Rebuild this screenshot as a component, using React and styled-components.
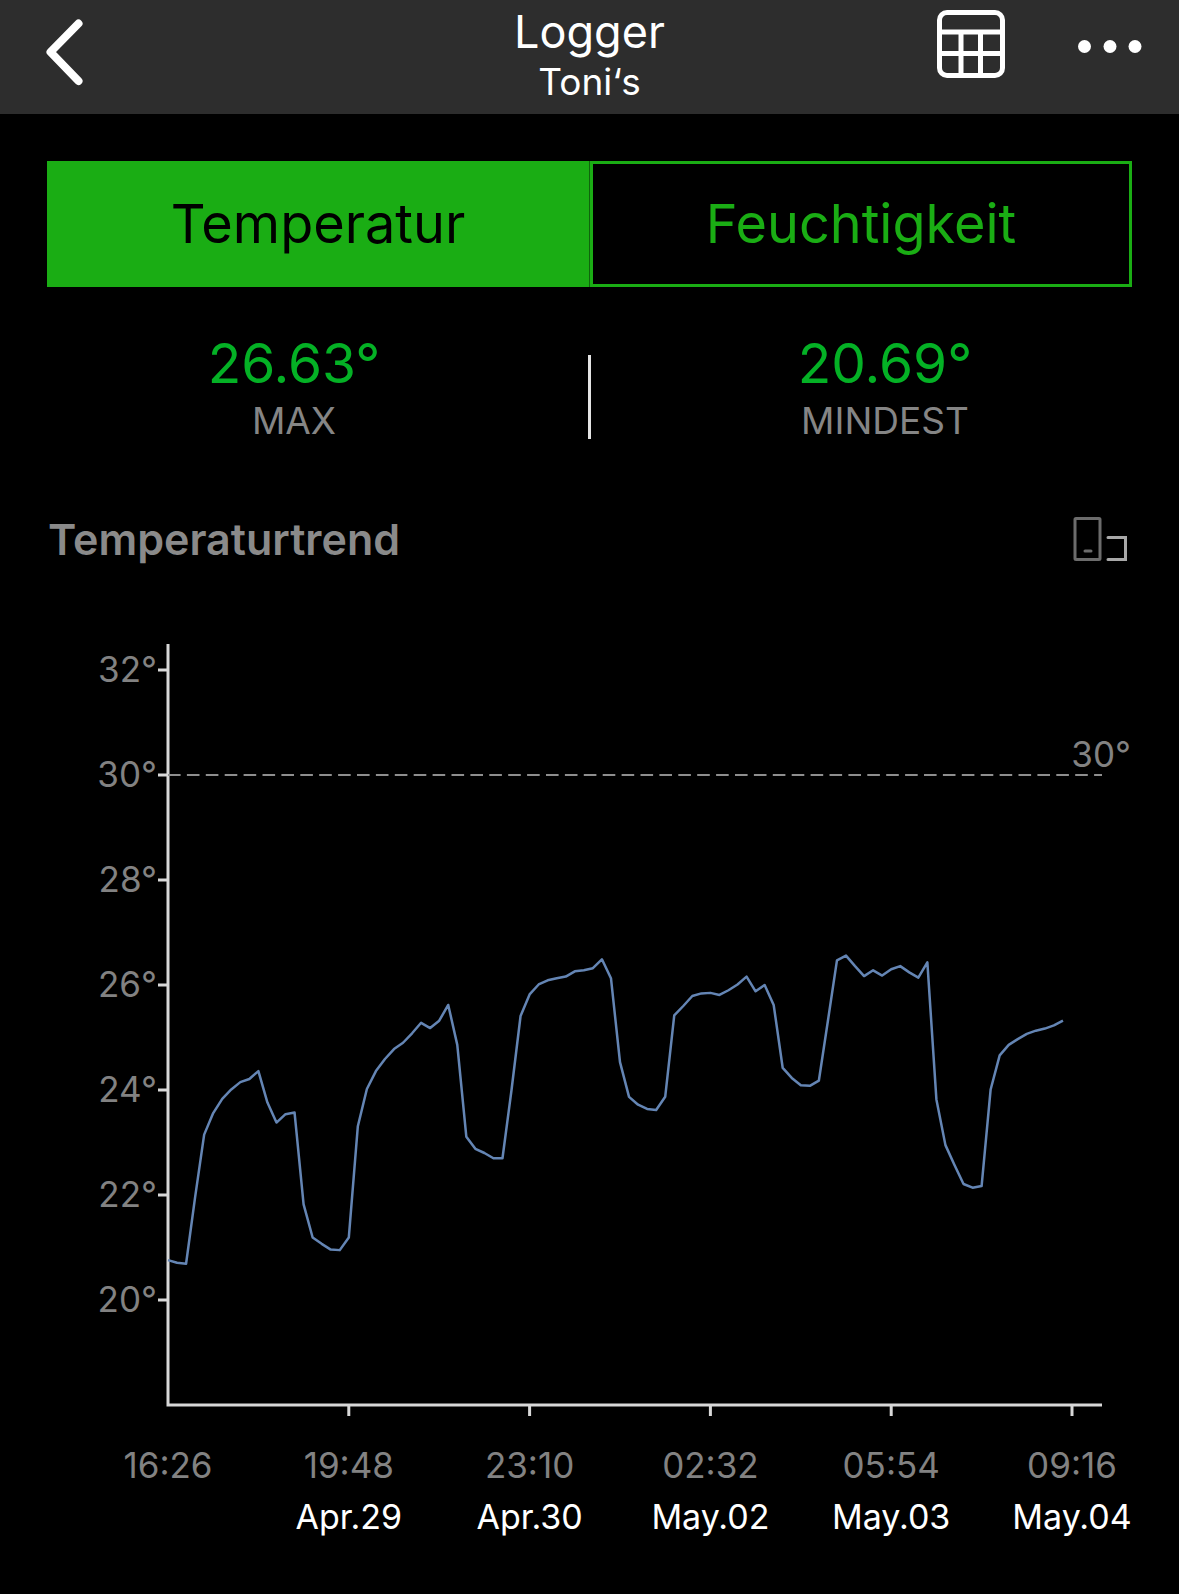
import React, { useState } from 'react'
import styled, { createGlobalStyle } from 'styled-components'

const GlobalStyle = createGlobalStyle`
    * {
        box-sizing: border-box;
    }
    body {
        margin: 0;
        background: #000;
        color: #fff;
        font-family: Inter, "Liberation Sans", sans-serif;
    }
    button {
        font-family: inherit;
        cursor: pointer;
    }
`
const Header = styled.header`
    display: grid;
    grid-template-columns: 1fr auto 1fr;
    height: 114px;
    padding: 0 37px;
    background: #2d2d2d;
`
const HeaderSide = styled.div`
    display: flex;
    align-items: flex-start;
    justify-content: ${props => props.$end ? 'flex-end' : 'flex-start'};
    gap: 73px;
    padding-top: 8px;
`
const IconButton = styled.button`
    display: flex;
    background: transparent;
    border: none;
    padding: 0;
    color: #fff;
`
const TitleBlock = styled.div`
    padding-top: 6px;
    text-align: center;
`
const Title = styled.h1`
    margin: 0;
    font-size: 45px;
    font-weight: 400;
    line-height: 52px;
`
const Subtitle = styled.p`
    margin: 0;
    font-size: 37px;
    line-height: 48px;
`
const Tabs = styled.div`
    display: flex;
    gap: 1px;
    margin: 47px 47px 0;
    background: #0f650c;
`
const Tab = styled.button`
    flex: 1;
    height: 126px;
    padding: 0;
    border: 3px solid #1aad14;
    background: ${props => props.$active ? '#1aad14' : '#000'};
    color: ${props => props.$active ? '#000' : '#1aad14'};
    font-size: 54px;
    line-height: 68px;
`
const Stats = styled.section`
    display: grid;
    grid-template-columns: 1fr 3px 1fr;
    margin-top: 42px;
`
const Stat = styled.div`
    text-align: center;
`
const StatValue = styled.div`
    color: #04b125;
    font-size: 55px;
    line-height: 68px;
`
const StatLabel = styled.div`
    color: #858585;
    font-size: 37px;
    line-height: 48px;
`
const Divider = styled.div`
    height: 84px;
    margin-top: 26px;
    background: #e4e4e4;
`
const TrendHeader = styled.div`
    display: flex;
    justify-content: space-between;
    align-items: center;
    margin: 68px 51px 0 48px;
`
const TrendTitle = styled.h2`
    margin: 0;
    color: #8a8a8a;
    font-size: 43px;
    font-weight: 600;
    line-height: 52px;
`
const ChartSvg = styled.svg`
    display: block;
    width: 100%;
    height: auto;
    margin-top: 55px;
`
const AxisLine = styled.path`
    fill: none;
    stroke: #d8d8d8;
    stroke-width: 3;
`
const LimitLine = styled.line`
    stroke: #8e8e8e;
    stroke-width: 2;
    stroke-dasharray: 12.6 6.3;
`
const Curve = styled.polyline`
    fill: none;
    stroke: #6485b4;
    stroke-width: 2.5;
    stroke-linejoin: round;
`
const AxisText = styled.text`
    fill: #828282;
    font-size: 35px;
    text-anchor: ${props => props.$anchor || 'middle'};
`
const DateText = styled(AxisText)`
    fill: #fff;
    font-size: 34px;
`

const readings = [
    20.76, 20.71, 20.69, 21.96, 23.15, 23.56, 23.83, 24.01, 24.15, 24.21,
    24.36, 23.76, 23.38, 23.54, 23.57, 21.82, 21.19, 21.07, 20.96, 20.95,
    21.19, 23.31, 24.02, 24.36, 24.59, 24.78, 24.9, 25.08, 25.28, 25.18,
    25.32, 25.62, 24.86, 23.11, 22.88, 22.8, 22.7, 22.7, 24, 25.41,
    25.82, 26.01, 26.09, 26.13, 26.16, 26.26, 26.28, 26.32, 26.49, 26.13,
    24.53, 23.87, 23.72, 23.64, 23.62, 23.87, 25.42, 25.6, 25.79, 25.84,
    25.85, 25.81, 25.9, 26.01, 26.16, 25.88, 26, 25.62, 24.42, 24.23,
    24.09, 24.08, 24.18, 25.32, 26.47, 26.56, 26.36, 26.17, 26.28, 26.18,
    26.3, 26.36, 26.24, 26.14, 26.43, 23.82, 22.95, 22.57, 22.21, 22.14,
    22.17, 24.01, 24.66, 24.86, 24.97, 25.07, 25.13, 25.17, 25.23, 25.32
]
const degrees = [32, 30, 28, 26, 24, 22, 20]
const times = [
    { time: '16:26' },
    { time: '19:48', date: 'Apr.29' },
    { time: '23:10', date: 'Apr.30' },
    { time: '02:32', date: 'May.02' },
    { time: '05:54', date: 'May.03' },
    { time: '09:16', date: 'May.04' }
]

const LEFT = 168
const RIGHT = 1102
const TOP = 24
const BOTTOM = 785

// one label every 20 readings, the axis starts at 18 degrees
const xOf = index => LEFT + index * 9.04
const yOf = value => BOTTOM - (value - 18) * 52.5

const BackIcon = () => (
    <svg width="50" height="80" viewBox="0 0 50 80" fill="none" stroke="currentColor" strokeWidth="8" strokeLinecap="round" strokeLinejoin="round" aria-hidden="true">
        <path d="M41.5 15.5L13.5 44L41.5 73" />
    </svg>
)

const TableIcon = () => (
    <svg width="68" height="72" viewBox="0 0 68 72" fill="none" stroke="currentColor" strokeWidth="5" aria-hidden="true">
        <rect x="2.5" y="4.5" width="63" height="63" rx="7.5" />
        <path d="M2 24H66M2 45.5H66M24 24V68M43.5 24V68" />
    </svg>
)

const MoreIcon = () => (
    <svg width="64" height="72" viewBox="0 0 64 72" fill="currentColor" aria-hidden="true">
        <circle cx="6.5" cy="38.5" r="6.5" />
        <circle cx="32" cy="38.5" r="6.5" />
        <circle cx="57" cy="38.5" r="6.5" />
    </svg>
)

const RotateIcon = () => (
    <svg width="55" height="46" viewBox="0 0 55 46" fill="none" strokeWidth="3" strokeLinecap="round" aria-hidden="true">
        <rect x="2" y="2.5" width="25" height="41" rx="1" stroke="#6c6c6c" />
        <path d="M12 35H18" stroke="#6c6c6c" />
        <path d="M35 21.5H52.5V43.5H35" stroke="#a8a8a8" />
    </svg>
)

const Chart = () => (
    <ChartSvg viewBox="0 0 1179 940" role="img" aria-label="Temperaturtrend">
        <AxisLine d={`M${LEFT} ${TOP}V${BOTTOM}H${RIGHT}`} />
        {degrees.map(value => (
            <g key={value}>
                <AxisLine d={`M${LEFT - 10} ${yOf(value)}H${LEFT}`} />
                <AxisText $anchor="end" x={LEFT - 11} y={yOf(value) + 12}>{value}°</AxisText>
            </g>
        ))}
        <LimitLine x1={LEFT} y1={yOf(30)} x2={RIGHT} y2={yOf(30)} />
        <AxisText $anchor="end" x="1131" y={yOf(30) - 8}>30°</AxisText>
        <Curve points={readings.map((value, index) => `${xOf(index)},${yOf(value)}`).join(' ')} />
        {times.map(({ time, date }, index) => (
            <g key={time}>
                {date && <AxisLine d={`M${xOf(index * 20)} ${BOTTOM}v11`} />}
                <AxisText x={xOf(index * 20)} y="858">{time}</AxisText>
                {date && <DateText x={xOf(index * 20)} y="909">{date}</DateText>}
            </g>
        ))}
    </ChartSvg>
)

const App = () => {
    const [tab, setTab] = useState('Temperatur')
    return (
        <>
            <GlobalStyle />
            <Header>
                <HeaderSide>
                    <IconButton aria-label="Zurück"><BackIcon /></IconButton>
                </HeaderSide>
                <TitleBlock>
                    <Title>Logger</Title>
                    <Subtitle>Toni‘s</Subtitle>
                </TitleBlock>
                <HeaderSide $end>
                    <IconButton aria-label="Tabelle"><TableIcon /></IconButton>
                    <IconButton aria-label="Mehr"><MoreIcon /></IconButton>
                </HeaderSide>
            </Header>
            <main>
                <Tabs>
                    {['Temperatur', 'Feuchtigkeit'].map(name => (
                        <Tab key={name} $active={tab === name} aria-pressed={tab === name} onClick={() => setTab(name)}>{name}</Tab>
                    ))}
                </Tabs>
                <Stats>
                    <Stat>
                        <StatValue>26.63°</StatValue>
                        <StatLabel>MAX</StatLabel>
                    </Stat>
                    <Divider />
                    <Stat>
                        <StatValue>20.69°</StatValue>
                        <StatLabel>MINDEST</StatLabel>
                    </Stat>
                </Stats>
                <TrendHeader>
                    <TrendTitle>Temperaturtrend</TrendTitle>
                    <IconButton aria-label="Drehen"><RotateIcon /></IconButton>
                </TrendHeader>
                <Chart />
            </main>
        </>
    )
}

export default App
